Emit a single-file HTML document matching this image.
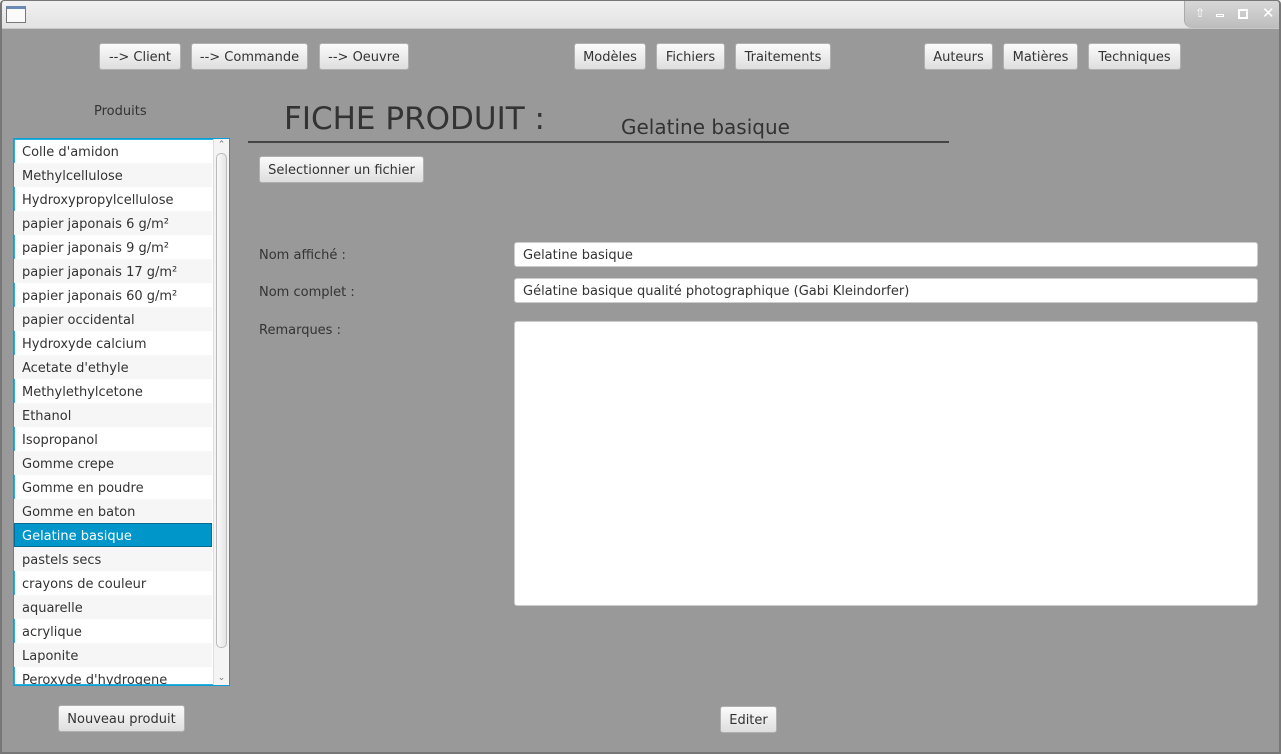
<!DOCTYPE html>
<html><head><meta charset="utf-8"><style>
*{box-sizing:border-box;margin:0;padding:0}
body{width:1281px;height:754px;overflow:hidden;background:#999;font-family:"DejaVu Sans","Liberation Sans",sans-serif;font-size:13px;color:#333;position:relative}
.win{position:absolute;left:0;top:0;width:1281px;height:754px;background:#999}
.frame{position:absolute;left:0;top:0;width:1281px;height:754px;border:2px solid #777;border-top:1px solid #777;border-radius:4px 4px 0 0;pointer-events:none}
.tb{position:absolute;left:0;top:0;width:1281px;height:29px;background:linear-gradient(#f2f2f2,#e2e2e2);border-bottom:1px solid #c8c8c8}
.ctl{position:absolute;right:2px;top:0;width:95px;height:28px;background:linear-gradient(#d8d8d8,#bdbdbd);border-radius:0 0 0 8px;border-left:1px solid #aaa;color:#fff;font-size:12px}
.b{position:absolute;height:27px;background:linear-gradient(#fbfbfb,#dedede);border:1px solid #b0b0b0;border-radius:3px;text-align:center;line-height:27px;color:#333;white-space:nowrap}
.a{position:absolute;white-space:nowrap}
.list{position:absolute;left:13px;top:138px;width:217px;height:548px;border:1px solid #0a9fd6;box-shadow:0 0 0 1px #2ab0e0 inset;background:#fff;overflow:hidden}
.row{height:24px;line-height:27px;padding-left:8px;width:198px}
.row:nth-child(even){background:#f6f6f6}
.sel{background:#0096c9!important;color:#fff;outline:1px solid #0a6a95;outline-offset:-1px}
.sb{position:absolute;right:0;top:0;width:16px;height:546px;background:#f4f4f4;border-left:1px solid #ddd}
.inp{position:absolute;background:#fff;border:1px solid #ccc;border-radius:3px;padding-left:8px;line-height:26px}
</style></head><body><div class="win">
<div class="tb"><div style="position:absolute;left:6px;top:6px;width:20px;height:17px;border:1px solid #777;background:#fafafa;border-top:3px solid #6a8ab5"></div>
<div class="ctl"><span style="position:absolute;left:10px;top:6px">⇧</span><span style="position:absolute;left:31px;top:14px;width:8px;height:3px;border:1px solid #fff"></span><span style="position:absolute;left:53px;top:9px;width:10px;height:10px;border:2px solid #fff"></span><span style="position:absolute;left:77px;top:4px;font-size:15px">✕</span></div></div>
<div class="b" style="left:99px;top:43px;width:82px">--&gt; Client</div>
<div class="b" style="left:191px;top:43px;width:117px">--&gt; Commande</div>
<div class="b" style="left:319px;top:43px;width:90px">--&gt; Oeuvre</div>
<div class="b" style="left:574px;top:43px;width:72px">Modèles</div>
<div class="b" style="left:656px;top:43px;width:69px">Fichiers</div>
<div class="b" style="left:735px;top:43px;width:96px">Traitements</div>
<div class="b" style="left:924px;top:43px;width:69px">Auteurs</div>
<div class="b" style="left:1003px;top:43px;width:75px">Matières</div>
<div class="b" style="left:1088px;top:43px;width:93px">Techniques</div>
<div class="a" style="left:94px;top:104px">Produits</div>
<div class="a" style="left:284px;top:101px;font-size:31px;color:#333">FICHE PRODUIT :</div>
<div class="a" style="left:621px;top:115px;font-size:20px;color:#333">Gelatine basique</div>
<div style="position:absolute;left:248px;top:141px;width:701px;height:2px;background:#444"></div>
<div class="b" style="left:259px;top:156px;width:165px">Selectionner un fichier</div>
<div class="a" style="left:259px;top:248px">Nom affiché :</div>
<div class="a" style="left:259px;top:285px">Nom complet :</div>
<div class="a" style="left:259px;top:323px">Remarques :</div>
<div class="inp" style="left:514px;top:242px;width:744px;height:25px">Gelatine basique</div>
<div class="inp" style="left:514px;top:278px;width:744px;height:25px">Gélatine basique qualité photographique (Gabi Kleindorfer)</div>
<div class="inp" style="left:514px;top:321px;width:744px;height:285px"></div>
<div class="list">
<div class="row">Colle d'amidon</div><div class="row">Methylcellulose</div><div class="row">Hydroxypropylcellulose</div><div class="row">papier japonais 6 g/m²</div><div class="row">papier japonais 9 g/m²</div><div class="row">papier japonais 17 g/m²</div><div class="row">papier japonais 60 g/m²</div><div class="row">papier occidental</div><div class="row">Hydroxyde calcium</div><div class="row">Acetate d'ethyle</div><div class="row">Methylethylcetone</div><div class="row">Ethanol</div><div class="row">Isopropanol</div><div class="row">Gomme crepe</div><div class="row">Gomme en poudre</div><div class="row">Gomme en baton</div><div class="row sel">Gelatine basique</div><div class="row">pastels secs</div><div class="row">crayons de couleur</div><div class="row">aquarelle</div><div class="row">acrylique</div><div class="row">Laponite</div><div class="row">Peroxyde d'hydrogene</div>
<div class="sb"><div style="text-align:center;font-size:9px;color:#777;line-height:12px">⌃</div><div style="position:absolute;left:2px;top:14px;width:11px;height:495px;background:linear-gradient(90deg,#fafafa,#e4e4e4);border:1px solid #bbb;border-radius:5px"></div><div style="position:absolute;bottom:2px;width:15px;text-align:center;font-size:9px;color:#777">⌄</div></div>
</div>
<div class="b" style="left:58px;top:705px;width:127px">Nouveau produit</div>
<div class="b" style="left:720px;top:706px;width:57px">Editer</div>
<div class="frame"></div>
</div></body></html>
